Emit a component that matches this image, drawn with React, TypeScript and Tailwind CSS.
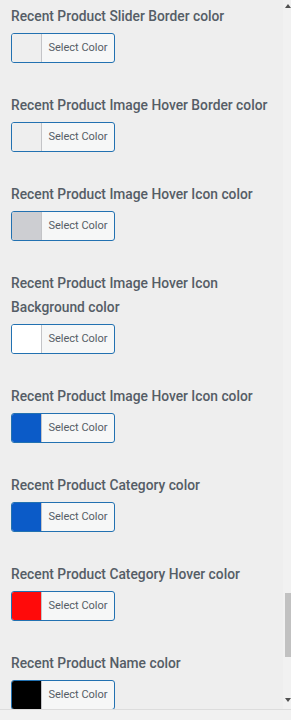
const fields = [
  { label: 'Recent Product Slider Border color', color: '#eeeeee' },
  { label: 'Recent Product Image Hover Border color', color: '#eeeeee' },
  { label: 'Recent Product Image Hover Icon color', color: '#cdced2' },
  { label: 'Recent Product Image Hover Icon Background color', color: '#ffffff' },
  { label: 'Recent Product Image Hover Icon color', color: '#0b5bc8' },
  { label: 'Recent Product Category color', color: '#0b5bc8' },
  { label: 'Recent Product Category Hover color', color: '#ff0a0a' },
  { label: 'Recent Product Name color', color: '#000000' },
];

function ColorButton({ color }: { color: string }) {
  return (
    <button
      type="button"
      className="flex h-[30px] w-[104px] items-stretch overflow-hidden rounded-[3px] border border-[#2271b1] bg-[#f6f7f7]"
    >
      <span className="w-[30px] border-r border-[#c3c4c7]" style={{ backgroundColor: color }} />
      <span className="flex flex-1 items-center justify-center text-[11px] text-[#555d66]">Select Color</span>
    </button>
  );
}

export default function App() {
  return (
    <div className="flex h-[720px] w-[291px] flex-col bg-[#eeeeee] font-['Roboto',sans-serif]">
      <div className="flex h-[709px] overflow-hidden">
        <div className="flex-1 overflow-hidden pl-[11px] pr-2 pt-1">
          {fields.map((f, i) => (
            <div key={i} className="mb-[30px]">
              <div className="mb-[5px] text-[13.8px] font-medium leading-[24px] text-[#555d66]">{f.label}</div>
              <ColorButton color={f.color} />
            </div>
          ))}
        </div>

        {/* fake scrollbar */}
        <div className="flex w-2 flex-col items-end bg-[#f1f1f1]">
          <div className="mt-1 h-0 w-0 border-x-[3px] border-b-[4px] border-x-transparent border-b-[#505050]" />
          <div className="mt-[585px] h-[64px] w-[6px] bg-[#c1c1c1]" />
          <div className="mt-[41px] h-0 w-0 border-x-[3px] border-t-[4px] border-x-transparent border-t-[#505050]" />
        </div>
      </div>
      <div className="flex-1 border-t border-[#dcdcdc] bg-[#f1f1f1]" />
    </div>
  );
}
